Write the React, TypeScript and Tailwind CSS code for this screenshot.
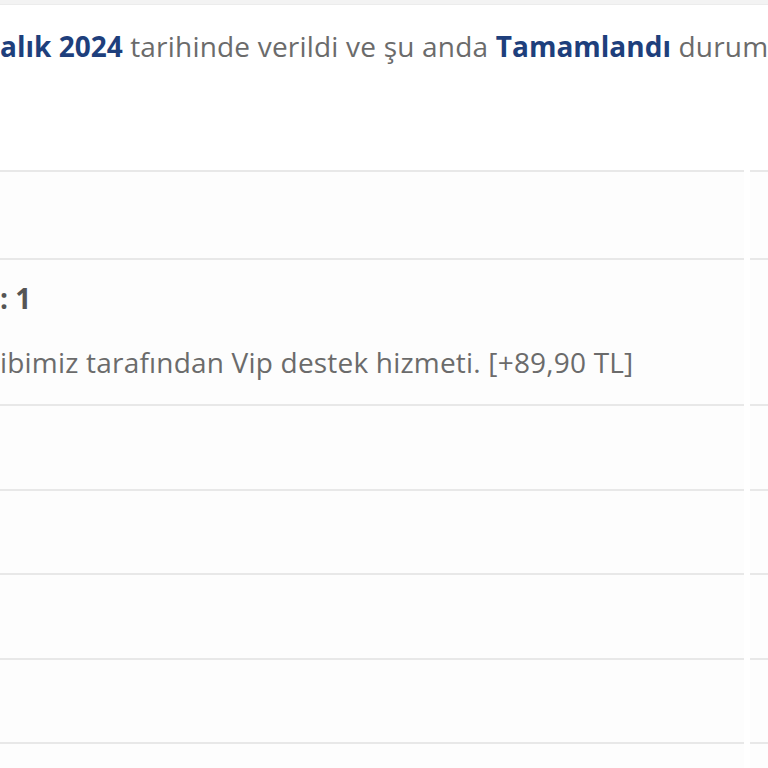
import React from "react";

const rows = [88, 146, 85, 84, 85, 84, 26];

export default function App() {
  return (
    <div
      className="w-[768px] h-[768px] overflow-hidden bg-white"
      style={{ fontFamily: '"Open Sans", "Noto Sans", sans-serif' }}
    >
      <div className="h-[5px] bg-[#f3f3f3] border-b border-[#ececec]" />
      <div className="h-[165px] pt-[23px] whitespace-nowrap text-[28px] leading-[36px] text-[#6b6b6b] tracking-[0.2px]">
        <span className="font-bold text-[#1e3f7c] tracking-normal">alık 2024</span> tarihinde verildi ve şu anda{" "}
        <span className="font-bold text-[#1e3f7c] tracking-normal">Tamamlandı</span> durum
      </div>
      {rows.map((h, i) => (
        <div key={i} className="flex gap-[6px]" style={{ height: h }}>
          <div className="w-[744px] shrink-0 border-t-2 border-[#e8e8e8] bg-[#fdfdfd]">
            {i === 1 && (
              <div className="pt-[20px] whitespace-nowrap text-[28px] leading-[36px] text-[#6b6b6b]">
                <div className="font-bold text-[#555555]">: 1</div>
                <div className="mt-[28px] tracking-[0.2px]">ibimiz tarafından Vip destek hizmeti. [+89,90 TL]</div>
              </div>
            )}
          </div>
          <div className="flex-1 border-t-2 border-[#e8e8e8] bg-[#fdfdfd]" />
        </div>
      ))}
    </div>
  );
}
